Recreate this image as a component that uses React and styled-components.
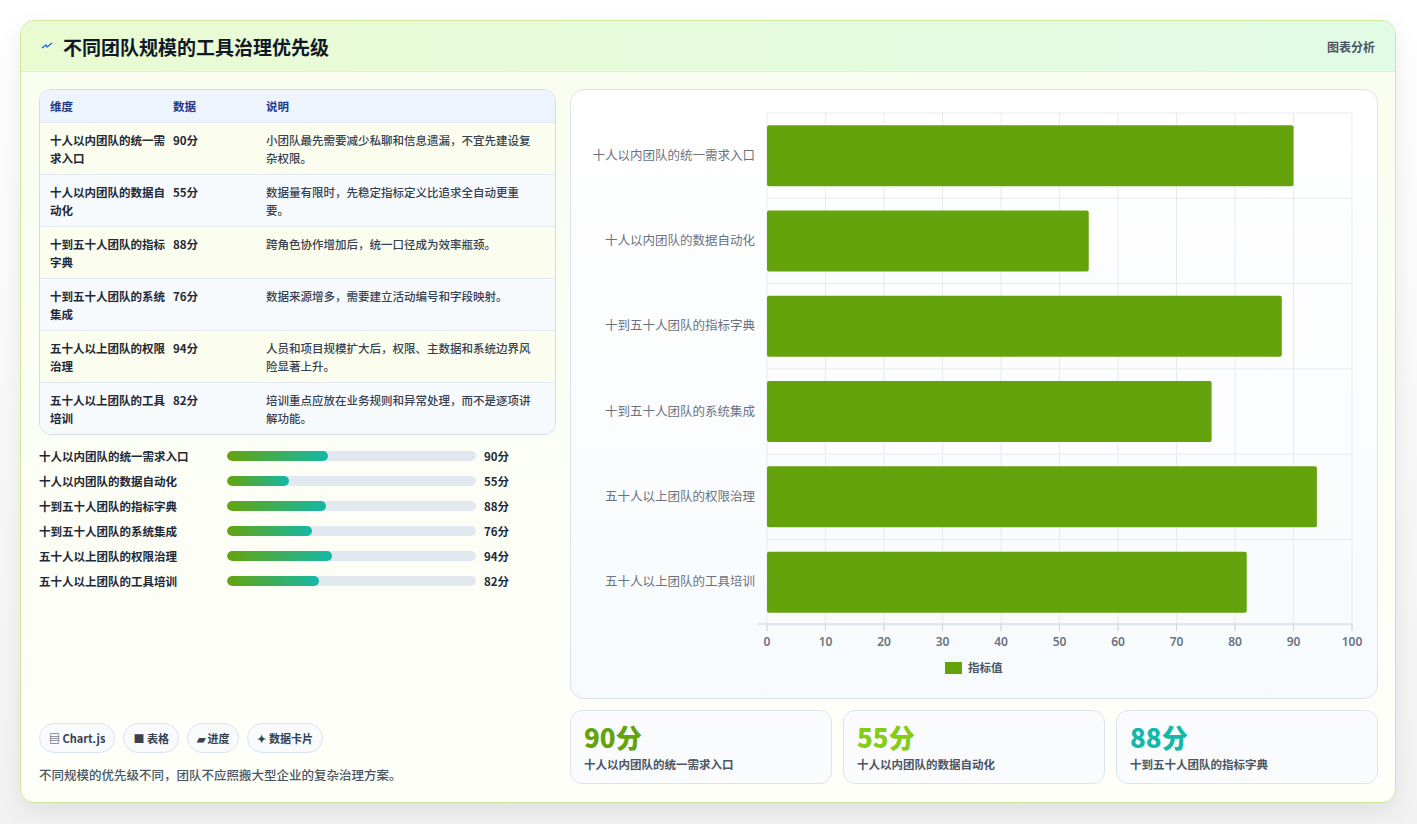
import React from "react";
import styled, { createGlobalStyle } from "styled-components";

const Global = createGlobalStyle`
  html,body{margin:0;padding:0;background:#f4f5f4;}
  body{font-family:"Noto Sans CJK SC","Noto Sans",sans-serif;}
`;

const rows = [
  ["十人以内团队的统一需求入口", 90, "小团队最先需要减少私聊和信息遗漏，不宜先建设复杂权限。"],
  ["十人以内团队的数据自动化", 55, "数据量有限时，先稳定指标定义比追求全自动更重要。"],
  ["十到五十人团队的指标字典", 88, "跨角色协作增加后，统一口径成为效率瓶颈。"],
  ["十到五十人团队的系统集成", 76, "数据来源增多，需要建立活动编号和字段映射。"],
  ["五十人以上团队的权限治理", 94, "人员和项目规模扩大后，权限、主数据和系统边界风险显著上升。"],
  ["五十人以上团队的工具培训", 82, "培训重点应放在业务规则和异常处理，而不是逐项讲解功能。"],
];

const Page = styled.div`padding:20px;height:824px;box-sizing:border-box;background:linear-gradient(#fff,#f2f2f2);`;
const Card = styled.div`
  width:1376px;height:783px;box-sizing:border-box;border:1px solid #cfe99a;border-radius:14px;
  background:linear-gradient(180deg,#f9fdef,#fefff9);box-shadow:0 8px 24px rgba(0,0,0,.08);overflow:hidden;
  display:flex;flex-direction:column;
`;
const Header = styled.div`
  height:55px;box-sizing:border-box;display:flex;align-items:center;justify-content:space-between;
  padding:0 20px;background:linear-gradient(90deg,#eafbd2,#e2fbe6);border-bottom:1px solid #e4efd6;
`;
const Title = styled.h1`margin:0;font-size:19px;font-weight:700;color:#111827;display:flex;align-items:center;gap:10px;`;
const Tag = styled.span`font-size:12px;color:#4b5563;font-weight:600;`;
const Body = styled.div`flex:1;display:grid;grid-template-columns:517px 808px;gap:14px;padding:17px 18px 18px 18px;`;
const Left = styled.div`display:flex;flex-direction:column;`;
const Table = styled.div`border:1px solid #d3dceb;border-radius:12px;overflow:hidden;background:#fff;`;
const TRow = styled.div`
  display:grid;grid-template-columns:123px 93px 1fr;padding:0 10px;min-height:${p=>p.head?32:52}px;box-sizing:border-box;
  align-items:${p=>p.head?"center":"start"};padding-top:${p=>p.head?0:8}px;
  background:${p=>p.head?"#eef4fd":p.alt?"#f7fafc":"#fbfeee"};
  border-top:${p=>p.head?"none":"1px solid #e2e8f0"};
  font-size:11.5px;line-height:18px;color:${p=>p.head?"#1e3a8a":"#374151"};font-weight:${p=>p.head?600:500};
`;
const Cell = styled.div`padding-right:8px;${p=>p.bold&&"font-weight:600;color:#1f2937;"}`;
const Bars = styled.div`display:flex;flex-direction:column;gap:7px;margin-top:12px;`;
const BarRow = styled.div`display:grid;grid-template-columns:188px 257px 1fr;gap:0;align-items:center;font-size:11.5px;font-weight:600;color:#1f2937;height:18px;`;
const Track = styled.div`height:10px;border-radius:5px;background:#e2e8f0;overflow:hidden;margin-right:8px;`;
const Fill = styled.div`height:100%;border-radius:5px;background:linear-gradient(90deg,#65a30d,#14b8a6);`;
const Score = styled.span`padding-left:0;`;
const Spacer = styled.div`flex:1;`;
const Chips = styled.div`display:flex;gap:8px;`;
const Chip = styled.span`border:1px solid #dbe3ee;border-radius:15px;padding:0 9px;height:28px;display:flex;align-items:center;font-size:11px;font-weight:600;color:#374151;background:#f8fafc;`;
const Note = styled.p`margin:12px 0 0;font-size:12.5px;color:#4b5563;font-weight:500;`;
const Right = styled.div`display:flex;flex-direction:column;gap:11px;`;
const ChartBox = styled.div`height:608px;border:1px solid #dbe4ee;border-radius:14px;background:linear-gradient(#fff,#f7fafc);`;
const Stats = styled.div`display:grid;grid-template-columns:repeat(3,1fr);gap:11px;`;
const Stat = styled.div`height:74px;box-sizing:border-box;border:1px solid #dbe4ee;border-radius:12px;background:#f9fbfd;padding:10px 13px;`;
const Big = styled.div`font-size:26px;font-weight:800;color:${p=>p.c};line-height:32px;`;
const Small = styled.div`font-size:11.5px;font-weight:600;color:#4b5563;margin-top:3px;`;

function Chart(){
  const x0=196,x1=781,yTop=23,rh=85.3;
  const sx=v=>x0+(x1-x0)*v/100;
  return (
    <svg width="808" height="608" style={{display:"block"}}>
      {Array.from({length:11},(_,i)=>(<line key={i} x1={sx(i*10)} x2={sx(i*10)} y1={yTop} y2={541} stroke="#e7ebf0"/>))}
      {Array.from({length:7},(_,i)=>(<line key={i} x1={x0} x2={x1} y1={yTop+i*rh} y2={yTop+i*rh} stroke="#e7ebf0"/>))}
      {rows.map((r,i)=>{const cy=yTop+i*rh+rh/2;return (
        <g key={i}>
          <rect x={x0} y={cy-30.5} width={sx(r[1])-x0} height={61} fill="#65a30d" rx="2"/>
          <text x={184} y={cy+4} textAnchor="end" fontSize="12.5" fill="#6b7280" fontFamily="Noto Sans CJK SC">{r[0]}</text>
        </g>);})}
      <line x1={x0-10} x2={x1} y1={534} y2={534} stroke="#cbd5e1"/>
      {Array.from({length:11},(_,i)=>(<g key={i}><line x1={sx(i*10)} x2={sx(i*10)} y1={534} y2={541} stroke="#cbd5e1"/><text x={sx(i*10)} y={556} textAnchor="middle" fontSize="12" fontWeight="600" fill="#6b7280" fontFamily="Noto Sans">{i*10}</text></g>))}
      <rect x={374} y={572} width={17} height={12} fill="#65a30d"/>
      <text x={397} y={582} fontSize="11.5" fill="#4b5563" fontWeight="600" fontFamily="Noto Sans CJK SC">指标值</text>
    </svg>
  );
}

export default function App(){
  return (<><Global/><Page><Card>
    <Header><Title><svg width="12" height="12" viewBox="0 0 12 12"><path d="M1 8 L5 5 L6 7 L11 3" stroke="#2563eb" strokeWidth="1.3" fill="none"/></svg>不同团队规模的工具治理优先级</Title><Tag>图表分析</Tag></Header>
    <Body>
      <Left>
        <Table>
          <TRow head><Cell>维度</Cell><Cell>数据</Cell><Cell>说明</Cell></TRow>
          {rows.map((r,i)=>(<TRow key={i} alt={i%2===1}><Cell bold>{r[0]}</Cell><Cell bold>{r[1]}分</Cell><Cell>{r[2]}</Cell></TRow>))}
        </Table>
        <Bars>
          {rows.map((r,i)=>(<BarRow key={i}><span>{r[0]}</span><Track><Fill style={{width:`${r[1]*0.45}%`}}/></Track><Score>{r[1]}分</Score></BarRow>))}
        </Bars>
        <Spacer/>
        <Chips><Chip>▤ Chart.js</Chip><Chip>■ 表格</Chip><Chip>▰ 进度</Chip><Chip>✦ 数据卡片</Chip></Chips>
        <Note>不同规模的优先级不同，团队不应照搬大型企业的复杂治理方案。</Note>
      </Left>
      <Right>
        <ChartBox><Chart/></ChartBox>
        <Stats>
          <Stat><Big c="#65a30d">90分</Big><Small>十人以内团队的统一需求入口</Small></Stat>
          <Stat><Big c="#84cc16">55分</Big><Small>十人以内团队的数据自动化</Small></Stat>
          <Stat><Big c="#14b8a6">88分</Big><Small>十到五十人团队的指标字典</Small></Stat>
        </Stats>
      </Right>
    </Body>
  </Card></Page></>);
}
